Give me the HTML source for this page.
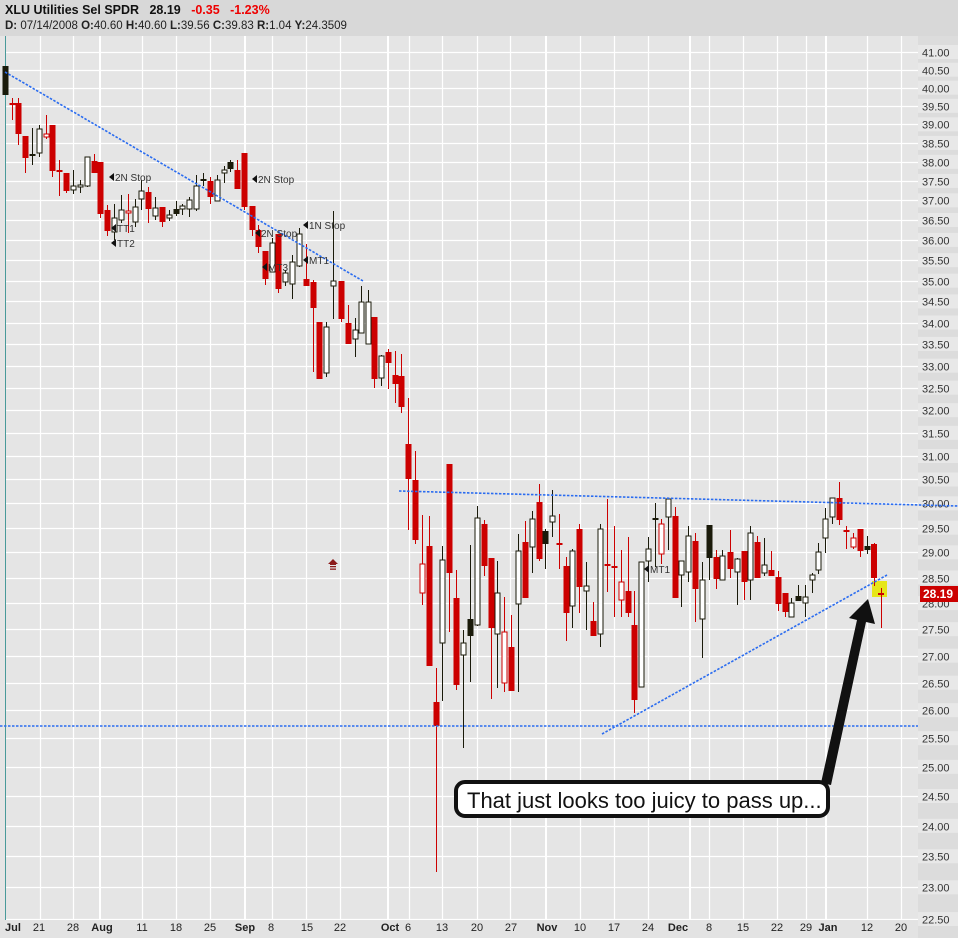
<!DOCTYPE html>
<html><head><meta charset="utf-8"><style>
html,body{margin:0;padding:0;background:#e5e5e5;width:958px;height:938px;overflow:hidden;font-family:"Liberation Sans",sans-serif}
#hdr{position:absolute;left:0;top:0;width:958px;height:36px;background:#d8d8d8}
#l1{position:absolute;left:5px;top:3px;font-size:12.5px;font-weight:bold;color:#111;white-space:pre}
#l2{position:absolute;left:5px;top:20px;font-size:11.5px;color:#222;white-space:pre}
svg{position:absolute;left:0;top:0}
</style></head><body>
<div id="hdr"><div id="l1">XLU Utilities Sel SPDR   28.19   <span style="color:#e00">-0.35   -1.23%</span></div>
<div id="l2"><b>D:</b> 07/14/2008 <b>O:</b>40.60 <b>H:</b>40.60 <b>L:</b>39.56 <b>C:</b>39.83 <b>R:</b>1.04 <b>Y:</b>24.3509</div></div>
<svg id="s" width="958" height="938" xmlns="http://www.w3.org/2000/svg"></svg>
<script>
var s=document.getElementById('s'),h='';
function Y(p){return 52+Math.log(41/p)*1445;}
h+='<rect x="918" y="36" width="40" height="902" fill="#dcdcdc"/>';
for(var p=41;p>=22.5;p-=0.5){var y=Y(p);
 h+='<rect x="918" y="'+(y-7)+'" width="40" height="14" fill="#e8e8e8"/>';}
h+='<rect x="0" y="36" width="918" height="902" fill="#e5e5e5"/>';
for(var p=41;p>=22.5;p-=0.5){var y=Math.round(Y(p))+0.5;
 h+='<line x1="5" x2="918" y1="'+y+'" y2="'+y+'" stroke="#fff" stroke-width="1.2"/>';
 h+='<text x="922" y="'+(y+4)+'" font-size="11" fill="#333">'+p.toFixed(2)+'</text>';}
var vx=[40,73,142,176,210,272,306,340,409,442,477,510,580,614,648,709,743,777,806,867,901];
vx.forEach(function(x){h+='<line x1="'+(x+0.5)+'" x2="'+(x+0.5)+'" y1="36" y2="920" stroke="#fff" stroke-width="1.2"/>';});
[100,245,388,546,690,826].forEach(function(x){h+='<line x1="'+x+'" x2="'+x+'" y1="36" y2="920" stroke="#fff" stroke-width="2"/>';});
h+='<line x1="5.5" x2="5.5" y1="36" y2="920" stroke="#4a9a9a" stroke-width="1"/>';
var labs=[['Jul',13,1],['21',39],['28',73],['Aug',102,1],['11',142],['18',176],['25',210],['Sep',245,1],['8',271],['15',307],['22',340],['Oct',390,1],['6',408],['13',442],['20',477],['27',511],['Nov',547,1],['10',580],['17',614],['24',648],['Dec',678,1],['8',709],['15',743],['22',777],['29',806],['Jan',828,1],['12',867],['20',901]];
h+='<rect x="0" y="920" width="918" height="18" fill="#e3e3e3"/>';
labs.forEach(function(l){h+='<text x="'+l[1]+'" y="931" text-anchor="middle" font-size="11" '+(l[2]?'font-weight="bold" ':'')+'fill="#222">'+l[0]+'</text>';});
var C=[[5,66,95,66,95,'B'],[12,98,120,104,104,'R'],[18,98,145,103,134,'R'],[25,136,173,136,158,'R'],[32,128,165,155,155,'B'],[39,125,157,129,153,'H'],[46,115,139,134,137,'r'],[52,125,177,125,171,'R'],[59,160,196,170,172,'R'],[66,173,193,173,191,'R'],[73,170,194,186,190,'H'],[80,180,193,185,187,'H'],[87,157,187,157,186,'H'],[94,154,173,161,173,'R'],[100,162,218,162,214,'R'],[107,205,236,210,231,'R'],[114,204,240,218,232,'H'],[121,195,223,210,220,'H'],[128,194,233,211,213,'r'],[135,199,227,207,222,'H'],[141,180,210,191,199,'H'],[148,187,223,192,209,'R'],[155,197,220,208,216,'H'],[162,207,227,207,222,'R'],[169,210,221,215,218,'H'],[176,201,216,209,214,'B'],[182,204,215,206,209,'H'],[189,197,217,200,209,'H'],[196,175,211,186,209,'H'],[203,173,186,180,181,'B'],[210,177,204,181,197,'R'],[217,175,201,180,201,'H'],[224,166,183,170,173,'H'],[230,160,172,162,169,'B'],[237,160,189,170,189,'R'],[244,153,210,153,207,'R'],[252,206,236,206,230,'R'],[258,225,253,230,247,'R'],[265,251,285,251,279,'R'],[272,238,272,243,272,'H'],[278,234,293,234,289,'R'],[285,270,286,273,282,'H'],[292,255,299,262,284,'H'],[299,228,267,234,266,'H'],[306,244,286,279,286,'R'],[313,280,372,282,308,'R'],[319,322,379,322,379,'R'],[326,322,377,327,373,'H'],[333,211,319,281,286,'H'],[341,281,322,281,319,'R'],[348,305,344,323,344,'R'],[355,318,357,330,339,'H'],[361,286,333,302,333,'H'],[368,290,344,302,344,'H'],[374,340,388,317,379,'R'],[381,355,386,356,378,'H'],[388,349,389,352,363,'R'],[395,351,403,375,384,'R'],[401,354,413,376,407,'R'],[408,398,530,444,479,'R'],[415,451,544,480,540,'R'],[422,515,605,564,593,'r'],[429,516,666,546,666,'R'],[436,668,872,702,726,'R'],[442,546,701,560,643,'H'],[449,464,632,464,573,'R'],[456,570,690,598,685,'R'],[463,630,748,643,655,'H'],[470,545,682,619,636,'B'],[477,506,626,518,625,'H'],[484,520,576,524,566,'R'],[491,558,699,558,628,'R'],[497,561,688,593,634,'H'],[504,597,692,632,683,'r'],[511,615,691,647,691,'R'],[518,534,692,551,604,'H'],[525,521,598,542,598,'R'],[532,511,573,519,547,'H'],[539,484,561,502,559,'R'],[545,529,569,531,544,'B'],[552,490,537,516,522,'H'],[559,514,569,544,544,'R'],[566,557,641,566,613,'R'],[572,549,628,551,606,'H'],[579,524,613,529,587,'R'],[586,562,630,586,591,'H'],[593,602,636,621,636,'R'],[600,524,647,529,634,'H'],[607,499,592,565,565,'R'],[614,526,617,567,567,'R'],[621,550,617,582,600,'r'],[628,537,617,591,613,'R'],[634,591,713,625,700,'R'],[641,562,687,562,687,'H'],[648,537,582,549,561,'H'],[655,503,567,519,520,'B'],[661,519,564,524,554,'r'],[668,499,550,499,517,'H'],[675,507,598,516,598,'R'],[681,561,607,561,575,'H'],[688,526,582,536,572,'H'],[695,533,622,541,589,'R'],[702,562,658,580,619,'H'],[709,525,580,525,558,'B'],[716,550,589,557,579,'R'],[722,550,580,556,580,'H'],[730,530,578,552,569,'R'],[737,558,605,559,572,'H'],[744,551,600,551,582,'R'],[750,526,600,533,580,'H'],[757,536,578,542,578,'R'],[764,538,576,565,573,'H'],[771,551,576,570,576,'R'],[778,571,611,577,604,'R'],[785,593,617,593,612,'R'],[791,598,617,603,617,'H'],[798,585,601,596,601,'B'],[805,585,617,597,603,'H'],[812,573,593,575,580,'H'],[818,543,574,552,570,'H'],[825,508,553,519,538,'H'],[832,498,524,498,517,'H'],[839,482,525,498,520,'R'],[846,526,549,531,531,'R'],[853,533,549,538,547,'r'],[860,529,557,529,551,'R'],[867,536,554,546,550,'B']];
C.forEach(function(c){var x=c[0]+0.5,col=(c[5]=='R'||c[5]=='r')?'#cc0000':'#1a1a0a';
 h+='<line x1="'+x+'" x2="'+x+'" y1="'+c[1]+'" y2="'+c[2]+'" stroke="'+col+'" stroke-width="1"/>';
 var bh=c[4]-c[3];
 if(bh<2){h+='<rect x="'+(x-3)+'" y="'+(c[3]-1)+'" width="6" height="2" fill="'+col+'"/>';}
 else if(c[5]=='R'||c[5]=='B'){h+='<rect x="'+(x-3)+'" y="'+c[3]+'" width="6" height="'+bh+'" fill="'+col+'"/>';}
 else{h+='<rect x="'+(x-2.5)+'" y="'+c[3]+'" width="5" height="'+bh+'" fill="#fff" stroke="'+col+'" stroke-width="1"/>';}
});
h+='<rect x="872" y="581" width="15" height="16" fill="#e6e617"/>';
h+='<line x1="874.5" x2="874.5" y1="543" y2="586" stroke="#cc0000"/><rect x="871" y="544" width="6" height="34" fill="#cc0000"/>';
h+='<line x1="881.5" x2="881.5" y1="588" y2="628" stroke="#cc0000"/><rect x="878" y="593" width="6" height="2" fill="#cc0000"/>';
var dl='stroke="#2a6cf0" stroke-width="1.6" stroke-dasharray="2.5,1.5" fill="none"';
h+='<line x1="5" y1="72" x2="363" y2="281" '+dl+'/>';
h+='<line x1="399" y1="491" x2="958" y2="506" '+dl+'/>';
h+='<line x1="602" y1="734" x2="887" y2="575" '+dl+'/>';
h+='<line x1="0" y1="726" x2="918" y2="726" '+dl+'/>';
function ann(x,y,t){h+='<path d="M'+x+' '+y+' l5 -4 v8 z" fill="#111"/><text x="'+(x+6)+'" y="'+(y+4)+'" font-size="10" fill="#333">'+t+'</text>';}
ann(109,177,'2N Stop');ann(111,228,'TT1');ann(111,243,'TT2');ann(252,179,'2N Stop');ann(303,225,'1N Stop');ann(255,233,'2N Stop');ann(303,260,'MT1');ann(262,267,'MT3');ann(644,569,'MT1');
h+='<path d="M328 564 l5 -5 l5 5 h-2 v1 h-6 v-1 z" fill="#8b1a1a"/><rect x="330" y="566" width="6" height="1.3" fill="#8b1a1a"/><rect x="330" y="568.5" width="6" height="1.3" fill="#8b1a1a"/>';
h+='<rect x="920" y="586" width="38" height="16" fill="#cc0000"/><text x="923" y="598" font-size="12" font-weight="bold" fill="#fff">28.19</text>';
h+='<path d="M821 783 L857 620 L849 618 L868 599 L875 624 L866 622 L831 785 Z" fill="#111"/>';
h+='<rect x="456" y="782" width="372" height="34" rx="9" fill="#fff" stroke="#111" stroke-width="4"/>';
h+='<text x="467" y="808" font-size="22" fill="#111">That just looks too juicy to pass up...</text>';
s.innerHTML=h;
</script>
</body></html>
